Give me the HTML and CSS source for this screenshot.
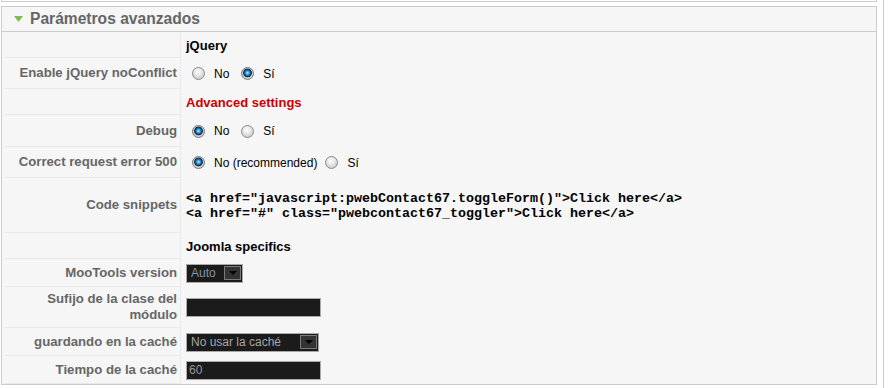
FILE: index.html
```html
<!DOCTYPE html>
<html lang="es">

<head>
    <meta charset="UTF-8">
    <meta name="viewport" content="width=device-width, initial-scale=1.0">
    <title>Parámetros avanzados</title>
    <link rel="stylesheet" href="styles.css">
</head>

<body>
    <div class="page">
        <div class="panel panel-prev"></div>

        <div class="panel">
            <h3 class="panel-title">
                <svg class="toggler-arrow" width="9" height="6" viewBox="0 0 9 6"><path d="M0 0H9L4.5 6Z" fill="#7cbf4e"/></svg>
                <span>Parámetros avanzados</span>
            </h3>

            <div class="panel-content">
                <div class="param param-heading">
                    <div class="param-key"></div>
                    <div class="param-value"><span class="group-title">jQuery</span></div>
                </div>

                <div class="param param-choice">
                    <div class="param-key">Enable jQuery noConflict</div>
                    <div class="param-value">
                        <input type="radio" class="radio" name="noconflict" id="nc0">
                        <label for="nc0">No</label>
                        <input type="radio" class="radio" name="noconflict" id="nc1" checked>
                        <label for="nc1">Sí</label>
                    </div>
                </div>

                <div class="param param-heading">
                    <div class="param-key"></div>
                    <div class="param-value"><span class="group-title warning">Advanced settings</span></div>
                </div>

                <div class="param param-choice tall">
                    <div class="param-key">Debug</div>
                    <div class="param-value">
                        <input type="radio" class="radio" name="debug" id="db0" checked>
                        <label for="db0">No</label>
                        <input type="radio" class="radio" name="debug" id="db1">
                        <label for="db1">Sí</label>
                    </div>
                </div>

                <div class="param param-choice">
                    <div class="param-key">Correct request error 500</div>
                    <div class="param-value">
                        <input type="radio" class="radio" name="error500" id="er0" checked>
                        <label for="er0" class="long">No (recommended)</label>
                        <input type="radio" class="radio" name="error500" id="er1">
                        <label for="er1">Sí</label>
                    </div>
                </div>

                <div class="param param-code">
                    <div class="param-key">Code snippets</div>
                    <div class="param-value">
                        <code class="snippet">&lt;a href="javascript:pwebContact67.toggleForm()"&gt;Click here&lt;/a&gt;
&lt;a href="#" class="pwebcontact67_toggler"&gt;Click here&lt;/a&gt;</code>
                    </div>
                </div>

                <div class="param param-heading">
                    <div class="param-key"></div>
                    <div class="param-value"><span class="group-title">Joomla specifics</span></div>
                </div>

                <div class="param param-field">
                    <div class="param-key">MooTools version</div>
                    <div class="param-value">
                        <div class="select select-small">
                            <span class="select-text active">Auto</span>
                            <span class="select-arrow"></span>
                        </div>
                    </div>
                </div>

                <div class="param param-field">
                    <div class="param-key">Sufijo de la clase del módulo</div>
                    <div class="param-value">
                        <input type="text" class="text-input" value="">
                    </div>
                </div>

                <div class="param param-field">
                    <div class="param-key">guardando en la caché</div>
                    <div class="param-value">
                        <div class="select select-wide">
                            <span class="select-text">No usar la caché</span>
                            <span class="select-arrow"></span>
                        </div>
                    </div>
                </div>

                <div class="param param-field">
                    <div class="param-key">Tiempo de la caché</div>
                    <div class="param-value">
                        <input type="text" class="text-input" value="60">
                    </div>
                </div>
            </div>
        </div>
    </div>
</body>

</html>
```

FILE: styles.css
```css
body {
    margin: 0;
    background: #fff;
    font-family: "Liberation Sans", Arial, sans-serif;
    font-size: 12px;
    color: #000;
}

.page {
    box-sizing: border-box;
    width: 884px;
    min-height: 100vh;
    padding: 0 6px 0 1px;
    border-right: 1px solid #ccc;
}

.panel {
    border: 1px solid #ccc;
    background: #f6f6f6;
    margin-bottom: 3px;
}

.panel-prev {
    box-sizing: border-box;
    height: 2px;
    border-top: none;
    margin-bottom: 4px;
    background: #fff;
}

.panel-title {
    display: flex;
    align-items: center;
    height: 24px;
    margin: 0;
    border-bottom: 1px solid #ccc;
    font-size: 15.6px;
    font-weight: bold;
    color: #666;
}

.toggler-arrow {
    margin: 0 7px 0 12px;
}

.panel-content {
    padding: 0 2px 0 3px;
}

.param {
    display: flex;
    min-height: 26px;
}

.param-choice {
    min-height: 31px;
}

.param-choice.tall {
    min-height: 32px;
}

.param-code {
    min-height: 55px;
}

.param-field {
    min-height: 28px;
}

.param-key {
    box-sizing: border-box;
    flex: 0 0 176px;
    display: flex;
    align-items: center;
    justify-content: flex-end;
    padding: 4px 3px 4px 8px;
    border-right: 1px solid #e9e9e9;
    border-bottom: 1px solid #e9e9e9;
    text-align: right;
    font-size: 13.2px;
    line-height: 16px;
    font-weight: bold;
    color: #666;
}

.param-value {
    flex: 1;
    display: flex;
    align-items: center;
    padding: 0 5px;
}

.group-title {
    font-size: 13px;
    font-weight: bold;
}

.group-title.warning {
    color: #c00;
}

/* radios */
.radio {
    appearance: none;
    -webkit-appearance: none;
    box-sizing: border-box;
    width: 13px;
    height: 13px;
    margin: 0 9px 0 0;
    border: 1px solid #8a8a8a;
    border-radius: 50%;
    background: radial-gradient(circle at 45% 35%, #fff 0, #eaeaea 35%, #bdbdbd 100%);
}

.radio:first-child {
    margin-left: 6px;
}

.radio:checked {
    border-color: #777;
    background: radial-gradient(circle at 50% 45%, #c2f0ff 0, #3aa8e6 20%, #0c5290 38%, #0f2640 48%, #c8c8c8 58%, #efefef 100%);
}

.param-value label {
    margin-right: 12px;
}

.param-value label.long {
    margin-right: 8px;
}

.snippet {
    font-family: "Liberation Mono", "Courier New", monospace;
    font-size: 13.33px;
    font-weight: bold;
    line-height: 15px;
    white-space: pre;
}

/* dark form controls */
.select {
    box-sizing: border-box;
    display: flex;
    align-items: center;
    height: 19px;
    padding: 0 1px 0 4px;
    border: 1px solid #a9a9a9;
    background: #1b1b1b;
    color: #a6a6a6;
}

.select-small {
    width: 57px;
}

.select-wide {
    width: 133px;
}

.select-text.active {
    color: #8194aa;
}

.select-arrow {
    box-sizing: border-box;
    display: flex;
    align-items: center;
    justify-content: center;
    width: 17px;
    height: 14px;
    margin-left: auto;
    border: 1px solid #7a7a7a;
    background: #333;
}

.select-arrow::after {
    content: "";
    border-top: 4px solid #000;
    border-left: 4px solid transparent;
    border-right: 4px solid transparent;
}

.text-input {
    box-sizing: border-box;
    width: 135px;
    height: 19px;
    margin: 0;
    padding: 0 2px;
    border: 1px solid #ababab;
    background: #1b1b1b;
    color: #9a9a9a;
    font-family: "Liberation Sans", Arial, sans-serif;
    font-size: 12px;
}
```
